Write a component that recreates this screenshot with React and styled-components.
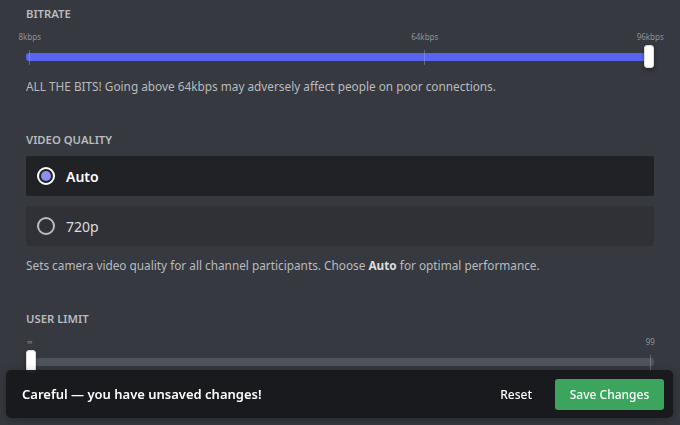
import styled, { createGlobalStyle } from 'styled-components';

const GlobalStyle = createGlobalStyle`
  html, body {
    margin: 0;
    padding: 0;
    background: #36393f;
  }
  body {
    font-family: "Noto Sans", "Open Sans", sans-serif;
    overflow: hidden;
  }
`;

function Slider({ marks, value, fill }) {
  return (
    <SliderBox>
      <Track>
        {fill && <TrackFill style={{ width: `${value}%` }} />}
      </Track>
      {marks.map((m) => (
        <Mark key={m.label} style={{ left: `${m.at}%` }}>
          <MarkLabel>{m.label}</MarkLabel>
          <MarkLine />
        </Mark>
      ))}
      <Thumb style={{ left: `calc(${value}% - ${value / 10}px)` }} />
    </SliderBox>
  );
}

function RadioRow({ label, checked }) {
  return (
    <Option $checked={checked}>
      <Radio $checked={checked} />
      <OptionLabel $checked={checked}>{label}</OptionLabel>
    </Option>
  );
}

export default function App() {
  return (
    <>
      <GlobalStyle />
      <Page>
        <Section>
          <SectionTitle>Bitrate</SectionTitle>
          <Slider
            fill
            value={100}
            marks={[
              { label: '8kbps', at: 0.6 },
              { label: '64kbps', at: 63.5 },
              { label: '96kbps', at: 99.4 },
            ]}
          />
          <Note>
            ALL THE BITS! Going above 64kbps may adversely affect people on poor connections.
          </Note>
        </Section>
        <Section>
          <SectionTitle>Video Quality</SectionTitle>
          <Options>
            <RadioRow label="Auto" checked />
            <RadioRow label="720p" />
          </Options>
          <Note $gap={11}>
            Sets camera video quality for all channel participants. Choose <b>Auto</b> for optimal performance.
          </Note>
        </Section>
        <Section>
          <SectionTitle>User Limit</SectionTitle>
          <Slider
            value={0}
            marks={[
              { label: '∞', at: 0.6 },
              { label: '99', at: 99.4 },
            ]}
          />
        </Section>
      </Page>
      <Notice>
        <NoticeText>Careful — you have unsaved changes!</NoticeText>
        <NoticeActions>
          <ResetButton>Reset</ResetButton>
          <SaveButton>Save Changes</SaveButton>
        </NoticeActions>
      </Notice>
    </>
  );
}

const Page = styled.div`
  width: 628px;
  padding: 6px 0 0 26px;
  display: flex;
  flex-direction: column;
  gap: 38px;
`;

const Section = styled.div`
  display: flex;
  flex-direction: column;
`;

const SectionTitle = styled.div`
  font-size: 11.3px;
  line-height: 16px;
  font-weight: 600;
  text-transform: uppercase;
  color: #b9bbbe;
`;

const SliderBox = styled.div`
  position: relative;
  height: 40px;
  margin-top: 8px;
`;

const Track = styled.div`
  position: absolute;
  left: 0;
  right: 0;
  top: 23px;
  height: 8px;
  border-radius: 3px;
  background: #4f545c;
  overflow: hidden;
`;

const TrackFill = styled.div`
  height: 100%;
  background: #5865f2;
`;

const Mark = styled.div`
  position: absolute;
  top: 0;
  width: 0;
  display: flex;
  flex-direction: column;
  align-items: center;
`;

const MarkLabel = styled.div`
  margin-top: 2px;
  font-size: 8px;
  line-height: 10px;
  color: #8e9297;
  white-space: nowrap;
`;

const MarkLine = styled.div`
  margin-top: 8px;
  width: 1px;
  height: 15px;
  background: rgba(185, 187, 190, 0.35);
`;

const Thumb = styled.div`
  position: absolute;
  top: 15px;
  width: 10px;
  height: 23px;
  background: #ffffff;
  border: 1px solid #dcddde;
  box-sizing: border-box;
  border-radius: 3px;
  box-shadow: 0 2px 4px rgba(0, 0, 0, 0.35);
`;

const Note = styled.div`
  margin-top: ${(p) => p.$gap || 8}px;
  font-size: 11.8px;
  line-height: 16px;
  color: #b9bbbe;
  b {
    color: #dcddde;
    font-weight: 700;
  }
`;

const Options = styled.div`
  margin-top: 8px;
  display: flex;
  flex-direction: column;
  gap: 10px;
`;

const Option = styled.div`
  height: 40px;
  display: flex;
  align-items: center;
  gap: 11px;
  padding-left: 11px;
  border-radius: 3px;
  background: ${(p) => (p.$checked ? '#202225' : '#2f3136')};
`;

const Radio = styled.div`
  width: 18px;
  height: 18px;
  box-sizing: border-box;
  border-radius: 50%;
  border: 2px solid ${(p) => (p.$checked ? '#ffffff' : '#b9bbbe')};
  display: flex;
  align-items: center;
  justify-content: center;
  &::after {
    content: '';
    display: ${(p) => (p.$checked ? 'block' : 'none')};
    width: 10px;
    height: 10px;
    border-radius: 50%;
    background: #8b90f0;
  }
`;

const OptionLabel = styled.div`
  font-size: 14px;
  font-weight: ${(p) => (p.$checked ? 600 : 400)};
  color: ${(p) => (p.$checked ? '#ffffff' : '#dcddde')};
`;

const Notice = styled.div`
  position: fixed;
  left: 6px;
  right: 7px;
  bottom: 7px;
  height: 48px;
  box-sizing: border-box;
  padding: 0 9px 0 16px;
  display: flex;
  align-items: center;
  justify-content: space-between;
  border-radius: 5px;
  background: rgba(24, 25, 28, 0.96);
  box-shadow: 0 2px 10px rgba(0, 0, 0, 0.3);
`;

const NoticeText = styled.div`
  font-size: 13px;
  font-weight: 600;
  color: #ffffff;
`;

const NoticeActions = styled.div`
  display: flex;
  align-items: center;
  gap: 23px;
`;

const ResetButton = styled.button`
  background: none;
  border: none;
  padding: 0;
  font-family: inherit;
  font-size: 12px;
  font-weight: 500;
  color: #ffffff;
`;

const SaveButton = styled.button`
  width: 109px;
  height: 31px;
  border: none;
  border-radius: 3px;
  background: #3ba55d;
  color: #ffffff;
  font-family: inherit;
  font-size: 12px;
  font-weight: 500;
`;
